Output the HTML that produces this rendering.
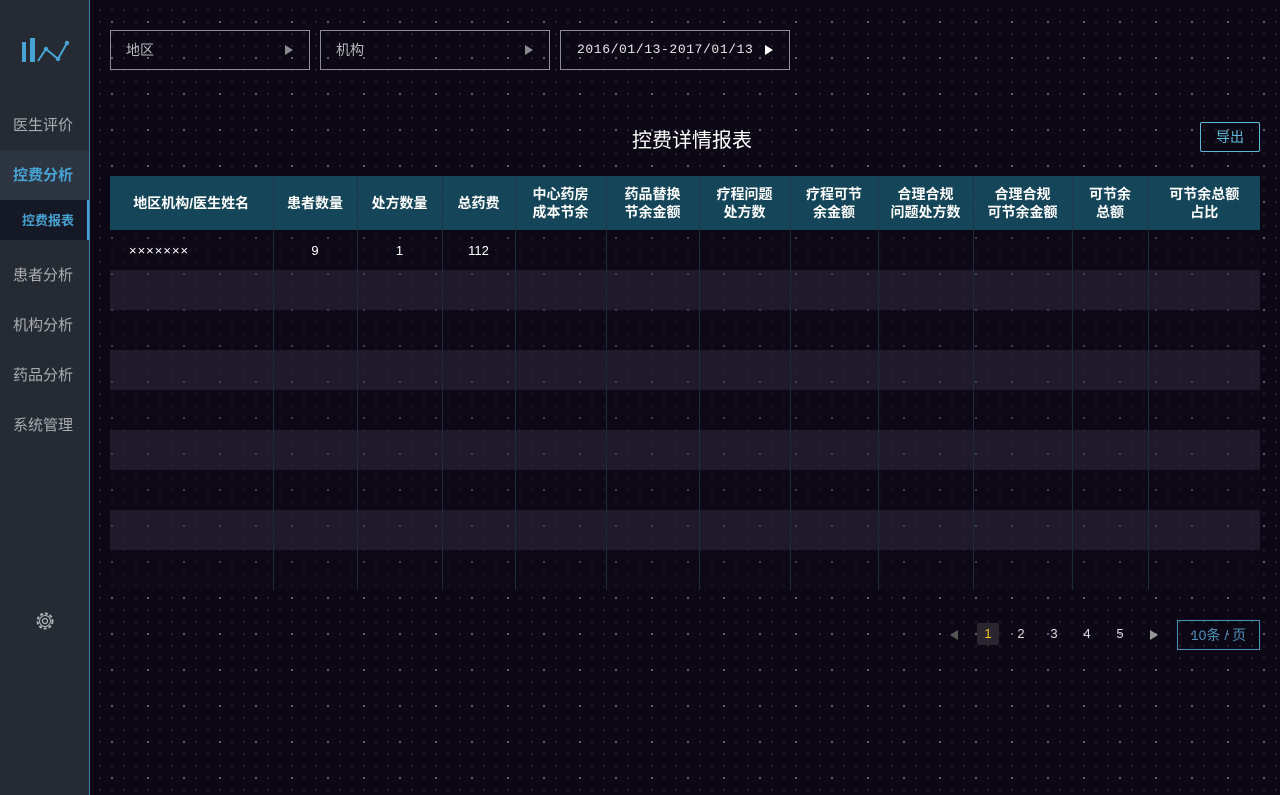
<!DOCTYPE html>
<html><head><meta charset="utf-8"><style>
*{margin:0;padding:0;box-sizing:border-box}
body{width:1280px;height:795px;overflow:hidden;background:#0c0714;font-family:"Liberation Sans","Noto Sans CJK SC",sans-serif;position:relative}
.bg{position:absolute;left:90px;top:0;right:0;bottom:0;
background-image:radial-gradient(circle,rgba(150,150,170,.55) 1px,transparent 1.3px),radial-gradient(circle,rgba(120,120,140,.28) 0.8px,transparent 1.1px);
background-size:36px 36px,12px 12px;background-position:4px 4px,4px 4px}
.side{position:absolute;left:0;top:0;width:90px;height:795px;background:#252a33;border-right:1px solid #3f7fae}
.side .it{position:absolute;left:0;width:89px;height:50px;line-height:52px;padding-left:13px;font-size:15px;color:#a9adb3}
.side .act{background:#2e3542;color:#47a3d4;font-weight:bold}
.side .sub{background:#151925;color:#47a3d4;font-weight:bold;font-size:13px;height:40px;line-height:42px;padding-left:22px;border-right:2px solid #47a3d4}
.sel{position:absolute;top:30px;height:40px;border:1px solid #8b8b90;color:#b8b8bc;font-size:14px;line-height:38px;padding-left:15px}
.sel .tri{position:absolute;right:16px;top:14px;width:0;height:0;border-left:8px solid #8a8a8e;border-top:5px solid transparent;border-bottom:5px solid transparent}
.title{position:absolute;left:560px;width:264px;top:124px;text-align:center;color:#fff;font-size:20px}
.exp{position:absolute;left:1200px;top:122px;width:60px;height:30px;border:1px solid #5bbbd8;border-radius:2px;color:#5bbbd8;font-size:14px;text-align:center;line-height:28px}
table{position:absolute;left:110px;top:176px;width:1150px;border-collapse:collapse;table-layout:fixed}
th{height:54px;background:rgba(22,74,94,.93);color:#fff;font-size:14px;font-weight:bold;line-height:18px;text-align:center;border-right:1px solid #23374a}
td{height:40px;border-right:1px solid #1e2b3a;color:#fff;font-size:13px;text-align:center}
tr.l td{background:rgba(45,38,60,.6)}
tr.d td{background:rgba(15,10,25,.4)}
th:last-child,td:last-child{border-right:none}
.pg{position:absolute;top:623px;height:22px;line-height:22px;font-size:13px;color:#ddd;text-align:center;width:22px}
</style></head><body>
<div class="bg"></div>
<div class="side">
<svg style="position:absolute;left:20px;top:38px" width="50" height="26" viewBox="0 0 50 26"><rect x="2" y="4" width="4" height="20" fill="#47a3d4"/><rect x="10" y="0" width="5" height="24" fill="#47a3d4"/><polyline points="18,23 26,11 38,21 47,5" fill="none" stroke="#47a3d4" stroke-width="2"/><circle cx="26" cy="11" r="2.2" fill="#47a3d4"/><circle cx="38" cy="21" r="2.2" fill="#47a3d4"/><circle cx="47" cy="5" r="2.2" fill="#47a3d4"/></svg>
<div class="it" style="top:100px">医生评价</div>
<div class="it act" style="top:150px">控费分析</div>
<div class="it sub" style="top:200px">控费报表</div>
<div class="it" style="top:250px">患者分析</div>
<div class="it" style="top:300px">机构分析</div>
<div class="it" style="top:350px">药品分析</div>
<div class="it" style="top:400px">系统管理</div>
<svg style="position:absolute;left:34px;top:610px" width="22" height="22" viewBox="0 0 22 22"><circle cx="11" cy="11" r="7.5" fill="none" stroke="#b0b4ba" stroke-width="2" stroke-dasharray="3 2"/><circle cx="11" cy="11" r="5.5" fill="none" stroke="#b0b4ba" stroke-width="1"/><circle cx="11" cy="11" r="2.5" fill="none" stroke="#b0b4ba" stroke-width="1.3"/></svg>
</div>
<div class="sel" style="left:110px;width:200px">地区<span class="tri"></span></div>
<div class="sel" style="left:320px;width:230px">机构<span class="tri"></span></div>
<div class="sel" style="left:560px;width:230px;color:#e8e8e8;font-family:'Liberation Mono',monospace;font-size:13px;letter-spacing:0.6px;padding-left:16px">2016/01/13-2017/01/13<span class="tri" style="border-left-color:#fff;right:16px"></span></div>
<div class="title">控费详情报表</div>
<div class="exp">导出</div>
<table>
<colgroup><col style="width:163px"><col style="width:84px"><col style="width:85px"><col style="width:73px"><col style="width:91px"><col style="width:93px"><col style="width:91px"><col style="width:88px"><col style="width:95px"><col style="width:99px"><col style="width:76px"><col style="width:112px"></colgroup>
<tr><th>地区机构/医生姓名</th><th>患者数量</th><th>处方数量</th><th>总药费</th><th>中心药房<br>成本节余</th><th>药品替换<br>节余金额</th><th>疗程问题<br>处方数</th><th>疗程可节<br>余金额</th><th>合理合规<br>问题处方数</th><th>合理合规<br>可节余金额</th><th>可节余<br>总额</th><th>可节余总额<br>占比</th></tr>
<tr class="d"><td style="text-align:left;padding-left:19px;letter-spacing:1px">×××××××</td><td>9</td><td>1</td><td>112</td><td></td><td></td><td></td><td></td><td></td><td></td><td></td><td></td></tr>
<tr class="l"><td></td><td></td><td></td><td></td><td></td><td></td><td></td><td></td><td></td><td></td><td></td><td></td></tr>
<tr class="d"><td></td><td></td><td></td><td></td><td></td><td></td><td></td><td></td><td></td><td></td><td></td><td></td></tr>
<tr class="l"><td></td><td></td><td></td><td></td><td></td><td></td><td></td><td></td><td></td><td></td><td></td><td></td></tr>
<tr class="d"><td></td><td></td><td></td><td></td><td></td><td></td><td></td><td></td><td></td><td></td><td></td><td></td></tr>
<tr class="l"><td></td><td></td><td></td><td></td><td></td><td></td><td></td><td></td><td></td><td></td><td></td><td></td></tr>
<tr class="d"><td></td><td></td><td></td><td></td><td></td><td></td><td></td><td></td><td></td><td></td><td></td><td></td></tr>
<tr class="l"><td></td><td></td><td></td><td></td><td></td><td></td><td></td><td></td><td></td><td></td><td></td><td></td></tr>
<tr class="d"><td></td><td></td><td></td><td></td><td></td><td></td><td></td><td></td><td></td><td></td><td></td><td></td></tr>
</table>
<div style="position:absolute;left:950px;top:630px;width:0;height:0;border-right:8px solid #555;border-top:5px solid transparent;border-bottom:5px solid transparent"></div>
<div class="pg" style="left:977px;background:#2a2630;color:#f0c419;border-radius:2px">1</div>
<div class="pg" style="left:1010px">2</div>
<div class="pg" style="left:1043px">3</div>
<div class="pg" style="left:1076px">4</div>
<div class="pg" style="left:1109px">5</div>
<div style="position:absolute;left:1150px;top:630px;width:0;height:0;border-left:8px solid #999;border-top:5px solid transparent;border-bottom:5px solid transparent"></div>
<div style="position:absolute;left:1177px;top:620px;width:83px;height:30px;border:1px solid #4a90b8;color:#4a90b8;font-size:14px;text-align:center;line-height:28px">10条 / 页</div>
</body></html>
